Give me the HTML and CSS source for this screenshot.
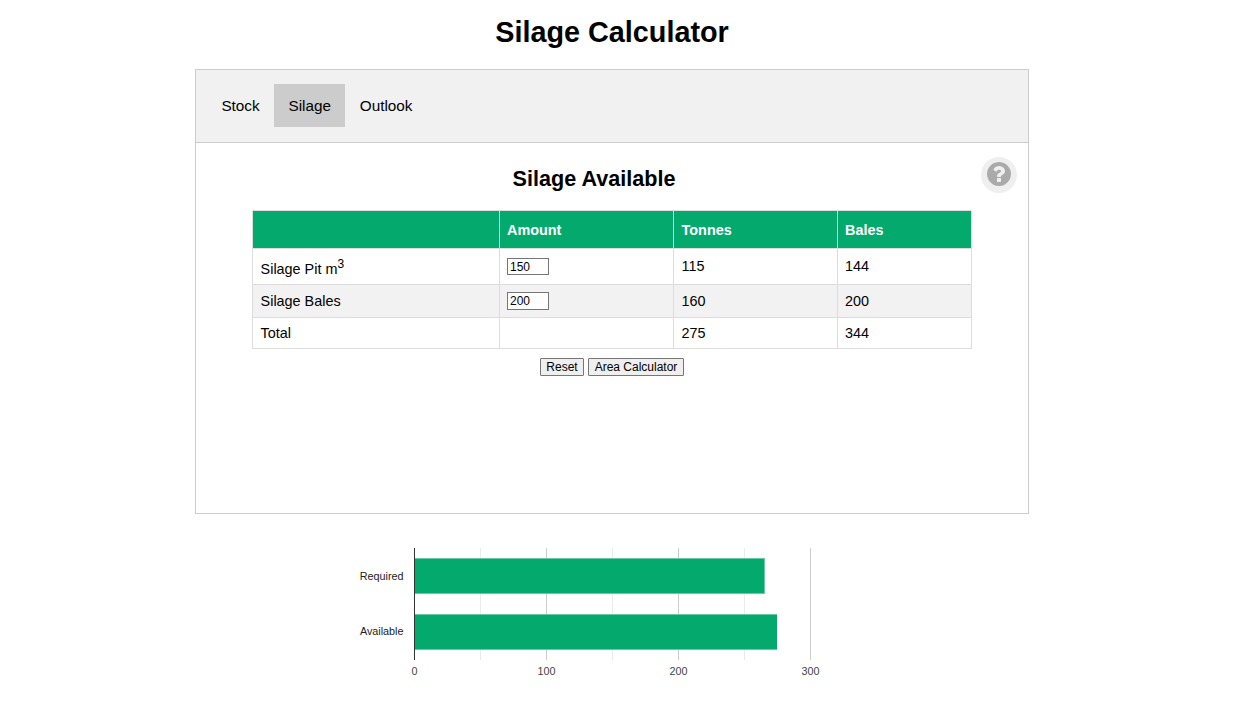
FILE: index.html
```html
<!DOCTYPE html>
<html lang="en">
<head>
<meta charset="utf-8">
<title>Silage Calculator</title>
<link rel="stylesheet" href="styles.css">
</head>
<body>
<main class="page">
  <h1 class="title">Silage Calculator</h1>
  <nav class="tabs">
    <button class="tab" type="button">Stock</button>
    <button class="tab tab-active" type="button">Silage</button>
    <button class="tab" type="button">Outlook</button>
  </nav>
  <section class="panel">
    <header class="panel-head">
      <h2 class="panel-title">Silage Available</h2>
      <button class="help" type="button" aria-label="Help">
        <svg class="help-icon" viewBox="128 128 1536 1536"><path fill="#aaa" d="M1024 1376v-192q0-14-9-23t-23-9h-192q-14 0-23 9t-9 23v192q0 14 9 23t23 9h192q14 0 23-9t9-23zm256-672q0-88-55.500-163t-138.500-116-170-41q-243 0-371 213-15 24 8 42l132 100q7 6 19 6 16 0 25-12 53-68 86-92 34-24 86-24 48 0 85.500 26t37.500 59q0 38-20 61t-68 45q-63 28-115.500 86.500t-52.500 125.500v36q0 14 9 23t23 9h192q14 0 23-9t9-23q0-19 21.500-49.500t54.500-49.500q32-18 49-28.500t46-35 44.500-48 28-60.500 12.500-81zm384 192q0 209-103 385.500t-279.500 279.500-385.500 103-385.500-103-279.500-279.500-103-385.500 103-385.500 279.500-279.500 385.500-103 385.500 103 279.500 279.500 103 385.500z"/></svg>
      </button>
    </header>
    <table class="grid">
      <colgroup><col class="col-name"><col class="col-amount"><col class="col-tonnes"><col class="col-bales"></colgroup>
      <thead>
        <tr class="row-head"><th></th><th>Amount</th><th>Tonnes</th><th>Bales</th></tr>
      </thead>
      <tbody>
        <tr class="row-pit"><td class="pit-name">Silage Pit m<sup>3</sup></td><td><input class="amount" type="text" value="150"></td><td class="pit-value">115</td><td class="pit-value">144</td></tr>
        <tr class="row-bales"><td>Silage Bales</td><td><input class="amount" type="text" value="200"></td><td>160</td><td>200</td></tr>
        <tr class="row-total"><td>Total</td><td></td><td>275</td><td>344</td></tr>
      </tbody>
    </table>
    <div class="actions">
      <button class="btn btn-reset" type="button">Reset</button>
      <button class="btn btn-area" type="button">Area Calculator</button>
    </div>
  </section>
  <svg class="chart" width="520" height="150" viewBox="0 0 520 150">
    <g shape-rendering="crispEdges">
      <path class="minor" d="M128 14h1v112h-1zM260 14h1v112h-1zM392 14h1v112h-1z"/>
      <path class="major" d="M194 14h1v112h-1zM326 14h1v112h-1zM458 14h1v112h-1z"/>
      <path class="bar-edge" d="M63 24h350v36H63zM63 80h362v36H63z"/>
      <path class="bar" d="M63 25h349v34H63zM63 81h362v34H63z"/>
      <path class="axis" d="M62 14h1v112h-1z"/>
    </g>
    <g class="category"><text x="51.500" y="46">Required</text><text x="51.500" y="101">Available</text></g>
    <g class="tick"><text x="62.500" y="141">0</text><text x="194.500" y="141">100</text><text x="326.500" y="141">200</text><text x="458.500" y="141">300</text></g>
  </svg>
</main>
</body>
</html>
```
FILE: styles.css
```css
* { box-sizing: border-box; }
body {
  margin: 0;
  background: #fff;
  color: #000;
  font: 14.4px "Liberation Sans", Arial, sans-serif;
}
.page { width: 834px; margin-left: 195px; }
.title {
  margin: 0;
  height: 69px;
  padding-top: 16px;
  font-size: 28.8px;
  line-height: 33px;
  text-align: center;
}
.tabs {
  display: flex;
  align-items: flex-start;
  height: 73px;
  padding: 14px 11px;
  border: 1px solid #ccc;
  border-bottom: 0;
  background: #f1f1f1;
}
.tab {
  height: 43px;
  padding: 0 14.4px;
  border: 0;
  background: transparent;
  color: #000;
  font: 15.3px "Liberation Sans", Arial, sans-serif;
}
.tab-active { background: #ccc; }
.panel { height: 372px; border: 1px solid #ccc; }
.panel-head {
  display: flex;
  align-items: flex-start;
  height: 67px;
  padding: 14px 11px 0 0;
}
.panel-title {
  flex: 1;
  margin: 9px 0 0 11px;
  font-size: 21.6px;
  line-height: 25px;
  text-align: center;
}
.help {
  display: flex;
  justify-content: center;
  align-items: flex-start;
  width: 36px;
  height: 36px;
  padding: 4.500px 0 0;
  border: 0;
  border-radius: 50%;
  background: #efefef;
}
.help-icon { width: 24px; height: 24px; }
.grid {
  width: 720px;
  margin: 0 auto;
  border-collapse: collapse;
  table-layout: fixed;
}
.col-name { width: 247px; }
.col-amount { width: 174px; }
.col-tonnes { width: 164px; }
.col-bales { width: 134px; }
.grid th, .grid td {
  padding: 0 7px;
  border: 1px solid #ddd;
  text-align: left;
  line-height: 16px;
}
.grid th { background: #04aa6d; color: #fff; }
.grid th:nth-child(3), .grid td:nth-child(3), .grid td:first-child { padding-left: 7.600px; }
.grid sup { font-size: 12px; line-height: 0; }
.row-head { height: 38px; }
.row-pit { height: 36px; }
.row-pit .pit-name { padding-top: 4px; }
.row-pit .pit-value { padding-bottom: 1px; }
.row-bales { height: 33px; background: #f2f2f2; }
.row-total { height: 31px; }
.amount {
  display: block;
  width: 42px;
  height: 17px;
  padding: 0 2px;
  border: 1px solid #767676;
  background: #fff;
  color: #000;
  font: 12px "Liberation Sans", Arial, sans-serif;
}
.row-bales .amount { height: 18px; }
.actions {
  display: flex;
  justify-content: center;
  gap: 4px;
  margin-top: 9px;
}
.btn {
  height: 18px;
  padding: 0;
  border: 1px solid #767676;
  border-radius: 1px;
  background: #efefef;
  color: #000;
  font: 12px "Liberation Sans", Arial, sans-serif;
}
.btn-reset { width: 44px; }
.btn-area { width: 96px; }
.chart { display: block; margin: 20px 0 0 157px; }
.minor { fill: #ebebeb; }
.major { fill: #ccc; }
.bar-edge { fill: #69cba5; }
.bar { fill: #04aa6d; }
.axis { fill: #333; }
.category, .tick { font-size: 10.8px; }
.category { fill: #222; text-anchor: end; }
.tick { fill: #444; text-anchor: middle; }
```
